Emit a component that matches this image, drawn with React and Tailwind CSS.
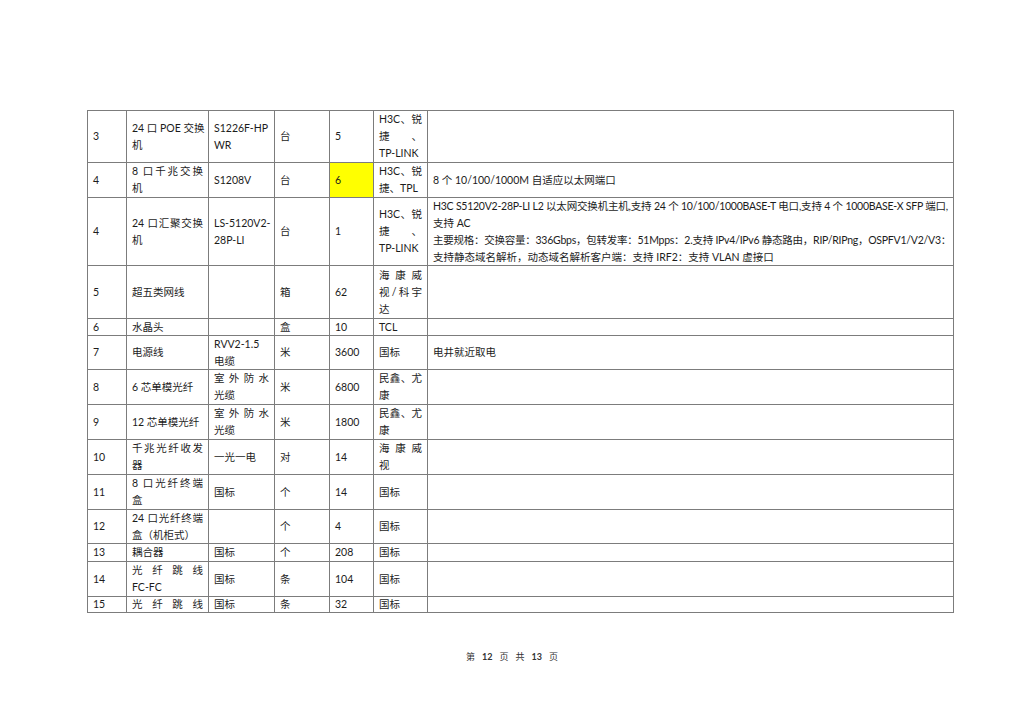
import React from "react";

const J = (t) => ({ t, j: true });
const L = (t) => ({ t, j: false });
const T = (t) => ({ t, j: true, tight: true });

const widths = ["w-[39px]", "w-[82px]", "w-[66px]", "w-[55px]", "w-[44px]", "w-[54px]", "w-[526px]"];

const rows = [
  { h: "h-[52px]", c: [[L("3")], [J("24 口 POE 交换"), L("机")], [L("S1226F-HP"), L("WR")], [L("台")], [L("5")], [J("H3C、锐"), J("捷 、"), L("TP-LINK")], []] },
  { h: "h-[35px]", c: [[L("4")], [J("8 口千兆交换"), L("机")], [L("S1208V")], [L("台")], [L("6")], [J("H3C、锐"), L("捷、TPL")], [L("8 个 10/100/1000M 自适应以太网端口")]], hl: 4 },
  {
    h: "h-[68px]",
    c: [
      [L("4")],
      [J("24 口汇聚交换"), L("机")],
      [L("LS-5120V2-"), L("28P-LI")],
      [L("台")],
      [L("1")],
      [J("H3C、锐"), J("捷 、"), L("TP-LINK")],
      [
        T("H3C S5120V2-28P-LI L2 以太网交换机主机,支持 24 个 10/100/1000BASE-T 电口,支持 4 个 1000BASE-X SFP 端口,"),
        L("支持 AC"),
        T("主要规格：交换容量：336Gbps，包转发率：51Mpps：2.支持 IPv4/IPv6 静态路由，RIP/RIPng，OSPFV1/V2/V3："),
        L("支持静态域名解析，动态域名解析客户端：支持 IRF2：支持 VLAN 虚接口"),
      ],
    ],
  },
  { h: "h-[53px]", c: [[L("5")], [L("超五类网线")], [], [L("箱")], [L("62")], [J("海康威"), J("视/科宇"), L("达")], []] },
  { h: "h-[17px]", c: [[L("6")], [L("水晶头")], [], [L("盒")], [L("10")], [L("TCL")], []] },
  { h: "h-[34px]", c: [[L("7")], [L("电源线")], [L("RVV2-1.5"), L("电缆")], [L("米")], [L("3600")], [L("国标")], [L("电井就近取电")]] },
  { h: "h-[35px]", c: [[L("8")], [L("6 芯单模光纤")], [J("室外防水"), L("光缆")], [L("米")], [L("6800")], [J("民鑫、尤"), L("康")], []] },
  { h: "h-[35px]", c: [[L("9")], [L("12 芯单模光纤")], [J("室外防水"), L("光缆")], [L("米")], [L("1800")], [J("民鑫、尤"), L("康")], []] },
  { h: "h-[35px]", c: [[L("10")], [J("千兆光纤收发"), L("器")], [L("一光一电")], [L("对")], [L("14")], [J("海康威"), L("视")], []] },
  { h: "h-[35px]", c: [[L("11")], [J("8 口光纤终端"), L("盒")], [L("国标")], [L("个")], [L("14")], [L("国标")], []] },
  { h: "h-[34px]", c: [[L("12")], [J("24 口光纤终端"), L("盒（机柜式）")], [], [L("个")], [L("4")], [L("国标")], []] },
  { h: "h-[18px]", c: [[L("13")], [L("耦合器")], [L("国标")], [L("个")], [L("208")], [L("国标")], []] },
  { h: "h-[35px]", c: [[L("14")], [J("光纤跳线"), L("FC-FC")], [L("国标")], [L("条")], [L("104")], [L("国标")], []] },
  { h: "h-[16px]", c: [[L("15")], [J("光纤跳线")], [L("国标")], [L("条")], [L("32")], [L("国标")], []] },
];

function Line({ l }) {
  if (l.j) {
    return (
      <div
        className={`whitespace-nowrap text-justify [text-align-last:justify] [text-justify:inter-character] ${
          l.tight ? "tracking-[-0.25px]" : ""
        }`}
      >
        {l.t}
      </div>
    );
  }
  return <div className="whitespace-nowrap">{l.t}</div>;
}

export default function App() {
  return (
    <div
      className="min-h-[724px] w-[1024px] bg-white pl-[87px] pt-[110px] text-[10.5px] leading-[17px] text-[#1c1c1c]"
      style={{ fontFamily: 'Lato, "Noto Sans CJK SC", sans-serif' }}
    >
      <div className="w-[867px] border-l border-t border-[#7c7c7c]">
        {rows.map((r, ri) => (
          <div key={ri} className={`flex ${r.h} border-b border-[#7c7c7c]`}>
            {r.c.map((lines, ci) => (
              <div
                key={ci}
                className={`${widths[ci]} flex shrink-0 items-center overflow-hidden border-r border-[#7c7c7c] px-[5px] ${
                  r.hl === ci ? "bg-[#ffff00]" : ""
                }`}
              >
                <div className="w-full">
                  {lines.map((l, li) => (
                    <Line key={li} l={l} />
                  ))}
                </div>
              </div>
            ))}
          </div>
        ))}
      </div>
      <div className="-ml-[87px] mt-[38px] flex w-[1024px] justify-center gap-[7px] text-[9px] leading-[12px] text-[#333]">
        <span>第</span>
        <span className="font-bold">12</span>
        <span>页</span>
        <span>共</span>
        <span className="font-bold">13</span>
        <span>页</span>
      </div>
    </div>
  );
}
